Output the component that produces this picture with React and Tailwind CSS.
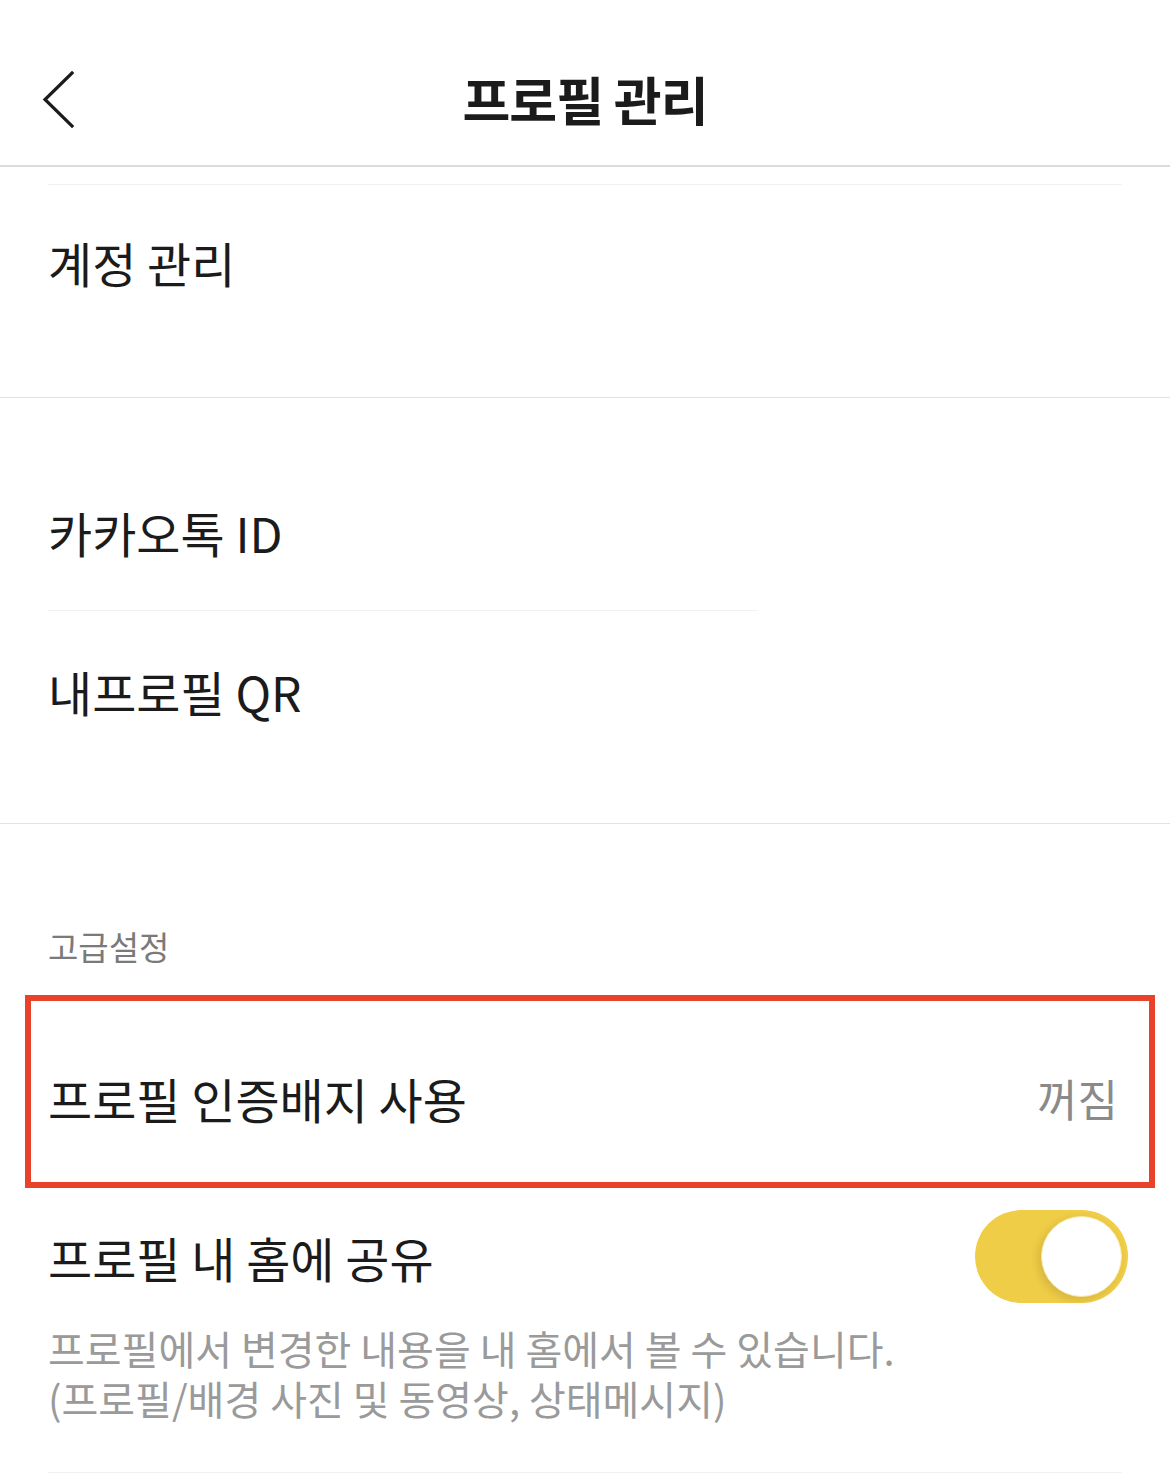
import React, { useState } from "react";

const font = "font-['Noto_Sans_CJK_KR','Noto_Sans',sans-serif]";

const Toggle = ({ on, onChange }) => (
  <button
    type="button"
    onClick={() => onChange(!on)}
    className={`relative h-[93px] w-[153px] shrink-0 rounded-full transition ${on ? "bg-[#f0cd47]" : "bg-[#e5e5e5]"}`}
  >
    <span
      className={`absolute top-[6px] h-[81px] w-[81px] rounded-full border border-[#f6e7a6] bg-white shadow-[-3px_3px_8px_rgba(0,0,0,0.12)] transition-all ${on ? "left-[66px]" : "left-[6px]"}`}
    />
  </button>
);

const App = () => {
  const [shareHome, setShareHome] = useState(true);

  return (
    <div className={`min-h-[1484px] w-full bg-white text-[#1b1b1b] ${font}`}>
      {/* header */}
      <div className="relative flex h-[167px] items-center justify-center border-b-2 border-[#dcdcdc]">
        <button type="button" className="absolute left-[40px] top-[70px]">
          <svg width="36" height="60" viewBox="0 0 36 60" fill="none">
            <polyline points="32,3 5,29.5 32,56" stroke="#1b1b1b" strokeWidth="3.2" strokeLinecap="square" />
          </svg>
        </button>
        <h1 className="mt-[32px] text-[52px] font-bold leading-[60px] tracking-[-1px]">프로필 관리</h1>
      </div>

      {/* account */}
      <div className="h-[231px] border-b border-[#e2e2e2] pt-[17px]">
        <div className="mx-[48px] h-px bg-[#f2f2f2]" />
        <div className="px-[48px] pt-[49px] text-[48px] leading-[56px]">계정 관리</div>
      </div>

      {/* id / qr */}
      <div className="border-b border-[#e2e2e2]">
        <div className="px-[48px] pb-[50px] pt-[106px] text-[48px] leading-[56px]">카카오톡 ID</div>
        <div className="ml-[48px] h-px w-[710px] bg-[#f2f2f2]" />
        <div className="px-[48px] pb-[104px] pt-[52px] text-[48px] leading-[56px]">내프로필 QR</div>
      </div>

      {/* advanced */}
      <div className="px-[48px] pt-[102px] text-[33px] leading-[40px] text-[#7a7a7a]">고급설정</div>

      <div className="ml-[25px] mr-[15px] mt-[29px] flex h-[193px] items-start justify-between border-[6px] border-[#e8432a] pl-[17px] pr-[31px] pt-[69px]">
        <span className="text-[48px] leading-[56px]">프로필 인증배지 사용</span>
        <span className="text-[44px] leading-[56px] text-[#8a8a8a]">꺼짐</span>
      </div>

      <div className="flex items-center justify-between pl-[48px] pr-[42px] pt-[22px]">
        <span className="text-[48px] leading-[56px]">프로필 내 홈에 공유</span>
        <Toggle on={shareHome} onChange={setShareHome} />
      </div>
      <p className="px-[48px] pt-[20px] text-[40px] leading-[50px] text-[#9a9a9a]">
        프로필에서 변경한 내용을 내 홈에서 볼 수 있습니다.
        <br />
        (프로필/배경 사진 및 동영상, 상태메시지)
      </p>
      <div className="mx-[48px] mt-[49px] h-px bg-[#f2f2f2]" />
    </div>
  );
};

export default App;
